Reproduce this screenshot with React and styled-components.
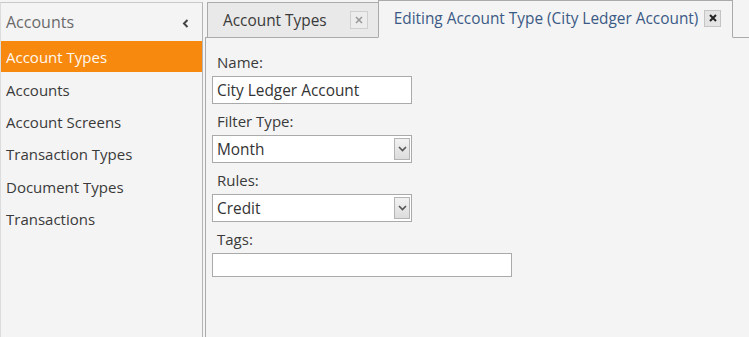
import styled, { createGlobalStyle } from "styled-components";

const GlobalStyle = createGlobalStyle`
    html, body {
        margin: 0;
        padding: 0;
        background: #f4f4f4;
        font-family: "Open Sans", "Noto Sans", sans-serif;
        color: #333;
    }
    * {
        box-sizing: border-box;
    }
`;

const menuItems = [
    "Account Types",
    "Accounts",
    "Account Screens",
    "Transaction Types",
    "Document Types",
    "Transactions",
];

const ArrowLeft = () => (
    <svg width="7" height="9" viewBox="0 0 7 9">
        <path d="M5.5 1 L2 4.5 L5.5 8" fill="none" stroke="#444" strokeWidth="2" />
    </svg>
);

const ArrowDown = () => (
    <svg width="9" height="6" viewBox="0 0 9 6">
        <path d="M1 1 L4.5 4.5 L8 1" fill="none" stroke="#555" strokeWidth="1.6" />
    </svg>
);

const Cross = ({ dark }) => (
    <svg width="8" height="8" viewBox="0 0 8 8">
        <path d="M1 1 L7 7 M7 1 L1 7" fill="none" stroke={dark ? "#222" : "#999"} strokeWidth={dark ? 2 : 1.6} />
    </svg>
);

const App = () => {
    return (
        <>
            <GlobalStyle />
            <Page>
                <Sidebar>
                    <SidebarHeader>
                        <span>Accounts</span>
                        <CollapseButton><ArrowLeft /></CollapseButton>
                    </SidebarHeader>
                    <Menu>
                        {menuItems.map((item, i) => (
                            <MenuItem key={item} $active={i === 0}>{item}</MenuItem>
                        ))}
                    </Menu>
                </Sidebar>
                <Main>
                    <TabStrip>
                        <Tab>
                            <TabLabel>Account Types</TabLabel>
                            <CloseBox><Cross /></CloseBox>
                        </Tab>
                        <Tab $active>
                            <TabLabel $active>Editing Account Type (City Ledger Account)</TabLabel>
                            <CloseBox $active><Cross dark /></CloseBox>
                        </Tab>
                    </TabStrip>
                    <Content>
                        <Field>
                            <Label>Name:</Label>
                            <TextInput>City Ledger Account</TextInput>
                        </Field>
                        <Field>
                            <Label>Filter Type:</Label>
                            <Select>
                                <span>Month</span>
                                <SelectButton><ArrowDown /></SelectButton>
                            </Select>
                        </Field>
                        <Field>
                            <Label>Rules:</Label>
                            <Select>
                                <span>Credit</span>
                                <SelectButton><ArrowDown /></SelectButton>
                            </Select>
                        </Field>
                        <Field>
                            <Label>Tags:</Label>
                            <TextInput $wide $short />
                        </Field>
                    </Content>
                </Main>
            </Page>
        </>
    );
};

const Page = styled.div`
    display: flex;
    height: 337px;
    overflow: hidden;
`;

const Sidebar = styled.div`
    width: 203px;
    margin-top: 2px;
    border-top: 1px solid #c8c8c8;
    border-left: 1px solid #dcdcdc;
    border-right: 1px solid #b4b4b4;
    background: #f4f4f4;
    flex-shrink: 0;
`;

const SidebarHeader = styled.div`
    height: 38px;
    display: flex;
    align-items: center;
    justify-content: space-between;
    padding: 0 13px 0 5px;
    font-size: 16px;
    color: #6a6a6a;
`;

const CollapseButton = styled.span`
    display: flex;
    align-items: center;
    padding-top: 2px;
`;

const Menu = styled.ul`
    list-style: none;
    margin: 0;
    padding: 0;
`;

const MenuItem = styled.li`
    height: ${p => (p.$active ? "31px" : "32.3px")};
    margin-bottom: ${p => (p.$active ? "1.5px" : "0")};
    display: flex;
    align-items: center;
    padding-left: 5px;
    font-size: 15px;
    color: ${p => (p.$active ? "#fff8ee" : "#3a3a3a")};
    background: ${p => (p.$active ? "#f7890f" : "transparent")};
`;

const Main = styled.div`
    flex: 1;
    margin-left: 2px;
    display: flex;
    flex-direction: column;
`;

const TabStrip = styled.div`
    height: 38px;
    display: flex;
    align-items: flex-end;
    padding-left: 2px;
    border-bottom: 1px solid #aaa;
`;

const Tab = styled.div`
    display: flex;
    align-items: center;
    height: ${p => (p.$active ? "38px" : "36px")};
    margin-bottom: -1px;
    margin-left: ${p => (p.$active ? "-1px" : "0")};
    padding: ${p => (p.$active ? "0 11px 2px 15px" : "0 10px 0 15px")};
    border: 1px solid #aaa;
    border-bottom-color: ${p => (p.$active ? "#f4f4f4" : "#aaa")};
    background: ${p => (p.$active ? "#f4f4f4" : "#e9e9e9")};
`;

const TabLabel = styled.span`
    font-size: 15.4px;
    color: ${p => (p.$active ? "#3b5a85" : "#3a3a3a")};
    margin-right: ${p => (p.$active ? "6px" : "23px")};
    white-space: nowrap;
`;

const CloseBox = styled.span`
    width: ${p => (p.$active ? "17px" : "18px")};
    height: ${p => (p.$active ? "17px" : "18px")};
    display: flex;
    align-items: center;
    justify-content: center;
    border: 1px solid ${p => (p.$active ? "#c4c4c4" : "#cfcfcf")};
    background: ${p => (p.$active ? "#e4e4e4" : "#ececec")};
`;

const Content = styled.div`
    flex: 1;
    border-left: 1px solid #aaa;
    padding: 13px 0 0 6px;
`;

const Field = styled.div`
    display: flex;
    flex-direction: column;
    align-items: flex-start;
    margin-bottom: 6px;
`;

const Label = styled.div`
    font-size: 15px;
    line-height: 22px;
    padding-left: 5px;
    margin-bottom: 3px;
    color: #3a3a3a;
`;

const TextInput = styled.div`
    width: ${p => (p.$wide ? "300px" : "200px")};
    height: ${p => (p.$short ? "24px" : "28px")};
    border: 1px solid #aaa;
    background: #fff;
    padding-left: 4px;
    display: flex;
    align-items: center;
    font-size: 15.4px;
    color: #333;
`;

const Select = styled.div`
    width: 200px;
    height: 28px;
    border: 1px solid #aaa;
    background: #fff;
    padding: 2px 1px 2px 4px;
    display: flex;
    align-items: center;
    justify-content: space-between;
    font-size: 15.4px;
    color: #333;
`;

const SelectButton = styled.span`
    width: 16px;
    height: 100%;
    display: flex;
    align-items: center;
    justify-content: center;
    border: 1px solid #b4b4b4;
    background: linear-gradient(#f2f2f2, #dcdcdc);
`;

export default App;
